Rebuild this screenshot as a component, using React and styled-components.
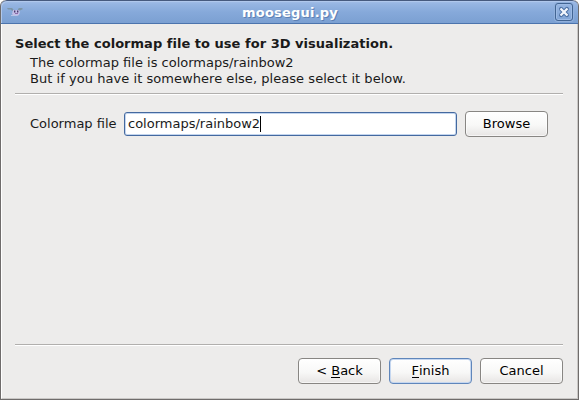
import React from 'react';
import styled, { createGlobalStyle } from 'styled-components';

const GlobalStyle = createGlobalStyle`
  * { box-sizing: border-box; }
  body {
    margin: 0;
    background: #fff;
    font-family: "DejaVu Sans", sans-serif;
    font-size: 13px;
    line-height: 16px;
    color: #1a1a1a;
  }
`;

const Window = styled.div`
  width: 579px;
  height: 400px;
  display: flex;
  flex-direction: column;
  border: 1px solid #6f6c6b;
  border-top: 0;
  border-radius: 6px 6px 0 0;
  background: #edeceb;
  overflow: hidden;
`;

const TitleBar = styled.header`
  height: 24px;
  flex: none;
  display: grid;
  grid-template-columns: 25px 1fr 23px;
  align-items: center;
  border-top: 1px solid #465a7e;
  border-bottom: 1px solid #4c74ad;
  border-radius: 6px 6px 0 0;
  background: linear-gradient(#a4bfe8 0, #96b5e2 3px, #86a9da 11px, #7ba0d2 100%);
  box-shadow: inset 1px 1px 0 #b0c8ec;
`;

const Title = styled.h1`
  margin: 0;
  padding: 2px 1px 0 0;
  text-align: center;
  font-size: 13px;
  line-height: 16px;
  font-weight: bold;
  letter-spacing: 0.2px;
  color: #fff;
  text-shadow: 1px 1px 0 #5d80b3;
`;

const AppIcon = styled.svg`
  width: 18px;
  height: 12px;
  margin-left: 6px;
`;

const CloseButton = styled.button`
  width: 18px;
  height: 18px;
  padding: 0;
  display: flex;
  align-items: center;
  justify-content: center;
  border: 1px solid #426593;
  border-radius: 3px;
  background: linear-gradient(#96b5e1, #81a5d6);
  box-shadow: inset 0 0 0 1px #9dbbe5, 0 0 0 1px #91b0dc;
`;

const CloseGlyph = styled.svg`
  width: 12px;
  height: 12px;
  flex: none;
`;

const Body = styled.main`
  flex: 1;
  display: flex;
  flex-direction: column;
  padding: 12px 14px 14px 13px;
  border: solid;
  border-width: 0 1px 1px;
  border-color: #edeceb #c9c7c5 #c9c7c5 #fff;
`;

const Heading = styled.h2`
  margin: 0 0 3px;
  font-size: 13px;
  line-height: 16px;
  font-weight: bold;
  letter-spacing: 0.025px;
`;

const Subtitle = styled.p`
  margin: 0 0 0 15px;
  line-height: 16px;
  letter-spacing: ${({ $tracking }) => $tracking || 'normal'};
`;

const Divider = styled.hr`
  width: 100%;
  height: 2px;
  flex: none;
  margin: ${({ $top }) => $top} 0 0;
  border: 0;
  border-top: 1px solid #b1afad;
  border-bottom: 1px solid #fff;
`;

const FieldRow = styled.div`
  display: flex;
  align-items: center;
  margin: 16px 15px 0;
`;

const Label = styled.label`
  width: 94px;
  flex: none;
`;

const Field = styled.div`
  flex: 1;
  height: 24px;
  margin-right: 8px;
  padding-left: 3px;
  display: flex;
  align-items: center;
  border: 1px solid #44699f;
  border-radius: 3px;
  background: #fff;
  box-shadow: inset 0 0 0 1px #c3d5ee;
`;

const Caret = styled.span`
  width: 1px;
  height: 16px;
  background: #000;
`;

const Button = styled.button`
  width: 83px;
  height: 26px;
  flex: none;
  padding: 0 0 1px;
  font: inherit;
  color: #000;
  border: 1px solid ${({ $primary }) => ($primary ? '#5f86bb' : '#888683')};
  border-radius: 4px;
  background: linear-gradient(#fff, #f8f8f7 55%, #e7e5e4);
  box-shadow: ${({ $primary }) => ($primary ? 'inset 0 0 0 1px #c5d7f0' : 'inset 0 0 0 1px rgba(255,255,255,.6)')};
`;

const Mnemonic = styled.span`
  display: inline-block;
  height: 15px;
  border-bottom: 1px solid #000;
`;

const Actions = styled.footer`
  display: flex;
  justify-content: flex-end;
  gap: 8px;
  margin-top: 12px;
`;

const Spacer = styled.div`
  flex: 1;
`;

export default function App() {
  return (
    <>
      <GlobalStyle />
      <Window>
        <TitleBar>
          <AppIcon viewBox="0 0 18 12">
            <path d="M0 2h5l1 1 1 2H5L4 3.5H1zM11 3l1-1h3l1 1-3 1.5h-2z" fill="#7d96a8" />
            <path d="M6 4h6l1 2-1 3-2 1H7L5 8z" fill="#c3bfe6" />
            <path d="M4 9h6v1H4z" fill="#b8c3e6" />
            <path d="M7 4.5h1.4v2H7zM10 4.5h1.4v2H10z" fill="#493b70" />
            <path d="M8 7h3v1H8z" fill="#8b6baa" />
          </AppIcon>
          <Title>moosegui.py</Title>
          <CloseButton aria-label="Close">
            <CloseGlyph viewBox="0 0 12 12">
              <path d="M3.1 3.1l5.8 5.8M8.9 3.1L3.1 8.9" stroke="#4a6fa3" strokeWidth="4.2" strokeLinecap="round" />
              <path d="M3.3 3.3l5.4 5.4M8.7 3.3L3.3 8.7" stroke="#f2f6fc" strokeWidth="2.3" strokeLinecap="square" />
            </CloseGlyph>
          </CloseButton>
        </TitleBar>
        <Body>
          <Heading>Select the colormap file to use for 3D visualization.</Heading>
          <Subtitle>The colormap file is colormaps/rainbow2</Subtitle>
          <Subtitle $tracking="0.045px">But if you have it somewhere else, please select it below.</Subtitle>
          <Divider $top="6px" />
          <FieldRow>
            <Label>Colormap file</Label>
            <Field>colormaps/rainbow2<Caret /></Field>
            <Button>Browse</Button>
          </FieldRow>
          <Spacer />
          <Divider $top="0" />
          <Actions>
            <Button>&lt; <Mnemonic>B</Mnemonic>ack</Button>
            <Button $primary><Mnemonic>F</Mnemonic>inish</Button>
            <Button>Cancel</Button>
          </Actions>
        </Body>
      </Window>
    </>
  );
}
